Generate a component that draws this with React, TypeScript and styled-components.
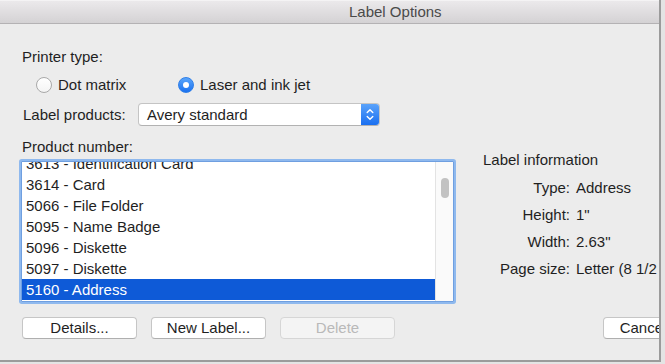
import React, { useLayoutEffect, useRef } from "react";
import styled, { createGlobalStyle } from "styled-components";

const Global = createGlobalStyle`
  html, body { margin: 0; padding: 0; background: #e4e4e4; }
  body { font-family: "Liberation Sans", Arial, sans-serif; }
  * { box-sizing: border-box; }
`;

const Window = styled.div`
  width: 661px;
  height: 362px;
  background: #ececec;
  border-right: 2px solid #9b9b9b;
  border-bottom: 2px solid #9b9b9b;
  overflow: hidden;
  display: flex;
  flex-direction: column;
  font-size: 15px;
  color: #1f1f1f;
`;

const TitleBar = styled.div`
  height: 24px;
  flex-shrink: 0;
  background: linear-gradient(#ebe9eb, #d4d2d4);
  border-top: 1px solid #f4f3f4;
  border-bottom: 1px solid #b4b2b4;
  padding-left: 349px;
  font-size: 15px;
  line-height: 21px;
  color: #4a4a4a;
`;

const Content = styled.div`
  padding: 24px 0 0 22px;
  display: flex;
  flex-direction: column;
`;

const Label = styled.div`
  line-height: 18px;
  height: 18px;
  white-space: nowrap;
`;

const RadioRow = styled.div`
  display: flex;
  margin-top: 10px;
  padding-left: 14px;
  height: 18px;
  align-items: center;
`;

const RadioItem = styled.label<{ $w?: number }>`
  display: flex;
  align-items: center;
  gap: 6px;
  width: ${(p) => (p.$w ? `${p.$w}px` : "auto")};
  line-height: 18px;
`;

const RadioCircle = styled.span<{ $on?: boolean }>`
  width: 16px;
  height: 16px;
  border-radius: 50%;
  flex-shrink: 0;
  display: flex;
  align-items: center;
  justify-content: center;
  background: ${(p) =>
    p.$on ? "linear-gradient(#5aa5fb, #1b71ef)" : "linear-gradient(#ffffff, #f4f4f4)"};
  border: 1px solid ${(p) => (p.$on ? "#2f7fe8" : "#a9a9a9")};
  &::after {
    content: "";
    display: ${(p) => (p.$on ? "block" : "none")};
    width: 6px;
    height: 6px;
    border-radius: 50%;
    background: #fff;
  }
`;

const ProductsRow = styled.div`
  display: flex;
  align-items: center;
  margin-top: 9px;
  height: 23px;
`;

const ProductsLabel = styled(Label)`
  width: 116px;
  padding-left: 1px;
`;

const Select = styled.div`
  width: 242px;
  height: 23px;
  display: flex;
  background: #fff;
  border: 1px solid #c4c4c4;
  border-bottom-color: #b2b2b2;
  border-radius: 4px;
  overflow: hidden;
`;

const SelectText = styled.div`
  flex: 1;
  padding-left: 8px;
  line-height: 21px;
`;

const Stepper = styled.div`
  width: 18px;
  background: linear-gradient(#5aa3fb, #1a6ff0);
  display: flex;
  align-items: center;
  justify-content: center;
`;

const Middle = styled.div`
  display: flex;
  margin-top: 12px;
`;

const ListColumn = styled.div`
  width: 432px;
  display: flex;
  flex-direction: column;
`;

const ListBox = styled.div`
  margin-top: 5px;
  margin-left: -1px;
  width: 433px;
  height: 141px;
  border: 1px solid #6f9fe0;
  box-shadow: 0 0 0 2px #8fb9ee;
  border-radius: 1px;
  background: #fff;
  display: flex;
`;

const Rows = styled.div`
  flex: 1;
  height: 139px;
  overflow: hidden;
`;

const RowsInner = styled.div`
  padding-bottom: 1px;
`;

const Row = styled.div<{ $sel?: boolean }>`
  height: 21px;
  line-height: 21px;
  padding-left: 4px;
  white-space: nowrap;
  background: ${(p) => (p.$sel ? "#0e5ad7" : "transparent")};
  color: ${(p) => (p.$sel ? "#ffffff" : "#1f1f1f")};
`;

const Track = styled.div`
  width: 18px;
  border-left: 1px solid #e3e3e3;
  background: #fafafa;
  display: flex;
  justify-content: center;
  padding-top: 16px;
`;

const Thumb = styled.div`
  width: 8px;
  height: 20px;
  border-radius: 4px;
  background: #c2c2c2;
`;

const InfoPanel = styled.div`
  margin-left: 29px;
  padding-top: 13px;
  display: flex;
  flex-direction: column;
`;

const InfoGrid = styled.div`
  margin-top: 5px;
  display: grid;
  grid-template-columns: 87px auto;
  column-gap: 6px;
  grid-auto-rows: 27px;
  align-items: center;
`;

const InfoKey = styled.div`
  text-align: right;
  white-space: nowrap;
`;

const InfoValue = styled.div`
  white-space: nowrap;
`;

const ButtonRow = styled.div`
  display: flex;
  margin-top: 15px;
  gap: 14px;
`;

const Button = styled.button<{ $gapLeft?: number; $w?: number }>`
  flex-shrink: 0;
  width: ${(p) => (p.$w ? `${p.$w}px` : "115px")};
  height: 22px;
  margin-left: ${(p) => (p.$gapLeft ? `${p.$gapLeft}px` : "0")};
  padding: 0;
  font-family: inherit;
  font-size: 15px;
  color: #1f1f1f;
  background: #ffffff;
  border: 1px solid #c6c6c6;
  border-bottom-color: #afafaf;
  border-radius: 4px;
  line-height: 20px;
  &:disabled {
    color: #b9b9b9;
    background: #f4f4f4;
    border-color: #d6d6d6;
  }
`;

const items = [
  "3613 - Identification Card",
  "3614 - Card",
  "5066 - File Folder",
  "5095 - Name Badge",
  "5096 - Diskette",
  "5097 - Diskette",
  "5160 - Address",
];

const StepperIcon = () => (
  <svg width="8" height="13" viewBox="0 0 8 13">
    <path d="M1.2 4.6 L4 1.8 L6.8 4.6" fill="none" stroke="#fff" strokeWidth="1.4" strokeLinecap="round" strokeLinejoin="round" />
    <path d="M1.2 8.4 L4 11.2 L6.8 8.4" fill="none" stroke="#fff" strokeWidth="1.4" strokeLinecap="round" strokeLinejoin="round" />
  </svg>
);

export default function App() {
  const rowsRef = useRef<HTMLDivElement>(null);
  useLayoutEffect(() => {
    if (rowsRef.current) rowsRef.current.scrollTop = 9;
  }, []);

  return (
    <>
      <Global />
      <Window>
        <TitleBar>Label Options</TitleBar>
        <Content>
          <Label>Printer type:</Label>
          <RadioRow>
            <RadioItem $w={142}>
              <RadioCircle />
              Dot matrix
            </RadioItem>
            <RadioItem>
              <RadioCircle $on />
              Laser and ink jet
            </RadioItem>
          </RadioRow>
          <ProductsRow>
            <ProductsLabel>Label products:</ProductsLabel>
            <Select>
              <SelectText>Avery standard</SelectText>
              <Stepper>
                <StepperIcon />
              </Stepper>
            </Select>
          </ProductsRow>
          <Middle>
            <ListColumn>
              <Label>Product number:</Label>
              <ListBox>
                <Rows ref={rowsRef}>
                  <RowsInner>
                    {items.map((it) => (
                      <Row key={it} $sel={it === "5160 - Address"}>
                        {it}
                      </Row>
                    ))}
                  </RowsInner>
                </Rows>
                <Track>
                  <Thumb />
                </Track>
              </ListBox>
            </ListColumn>
            <InfoPanel>
              <Label>Label information</Label>
              <InfoGrid>
                <InfoKey>Type:</InfoKey>
                <InfoValue>Address</InfoValue>
                <InfoKey>Height:</InfoKey>
                <InfoValue>1"</InfoValue>
                <InfoKey>Width:</InfoKey>
                <InfoValue>2.63"</InfoValue>
                <InfoKey>Page size:</InfoKey>
                <InfoValue>Letter (8 1/2 x 11 in)</InfoValue>
              </InfoGrid>
            </InfoPanel>
          </Middle>
          <ButtonRow>
            <Button>Details...</Button>
            <Button>New Label...</Button>
            <Button disabled>Delete</Button>
            <Button $gapLeft={194} $w={80}>Cancel</Button>
            <Button $w={80}>OK</Button>
          </ButtonRow>
        </Content>
      </Window>
    </>
  );
}
